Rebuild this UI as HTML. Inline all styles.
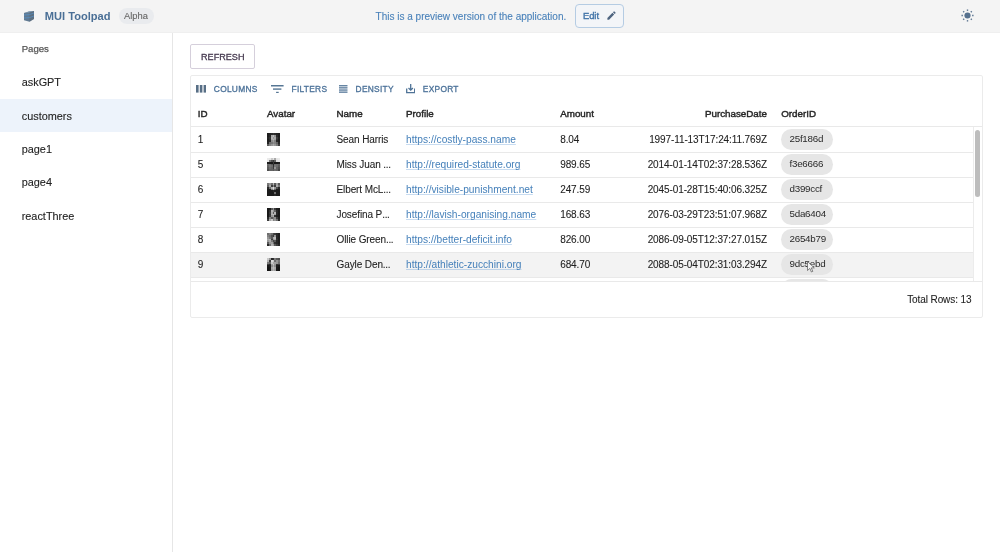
<!DOCTYPE html>
<html><head><meta charset="utf-8">
<style>
*{box-sizing:border-box;margin:0;padding:0}
html,body{width:1000px;height:552px;overflow:hidden;background:#fff;font-family:"Liberation Sans",sans-serif;color:#2b2b2b}
.abs{position:absolute}
.t{position:absolute;white-space:nowrap;line-height:1}
#hdr{position:absolute;left:0;top:0;width:1000px;height:33px;background:#f4f4f4;border-bottom:1px solid #efefef}
#side{position:absolute;left:0;top:33px;width:173px;height:519px;background:#fff;border-right:1px solid #e6e6e6}
.sel{position:absolute;left:0;top:99px;width:172px;height:33px;background:#edf3fb}
#refresh{position:absolute;left:190px;top:44px;width:65px;height:25px;border:1px solid #d5cfdb;border-radius:2px;background:#fff}
#grid{position:absolute;left:190px;top:75px;width:793px;height:243px;border:1px solid #ebebeb;border-radius:2px;background:#fff}
.hl{position:absolute;height:1px;background:#e9e9e9}
.cell{position:absolute;white-space:nowrap;line-height:1;font-size:10px;color:#222;letter-spacing:-0.1px;-webkit-text-stroke:0.08px #222}
.hd{position:absolute;white-space:nowrap;line-height:1;font-size:9.8px;font-weight:400;-webkit-text-stroke:0.42px #262626;color:#262626}
.lnk{-webkit-text-stroke:0 !important;letter-spacing:0 !important;color:#4580ba;font-size:10.2px !important;text-decoration:underline;text-decoration-color:rgba(74,140,210,0.3);text-decoration-thickness:1px;text-underline-offset:0.5px;text-decoration-skip-ink:none}
.chip{position:absolute;height:21px;border-radius:11px;background:#e6e6e6}
.av{position:absolute;width:13px;height:13px;background:#555}
.tb{position:absolute;white-space:nowrap;line-height:1;font-size:8.4px;margin-top:-0.1px;font-weight:400;letter-spacing:0.28px;color:#4c7299;-webkit-text-stroke:0.3px #4c7299}
</style></head><body><div id="root" style="position:absolute;left:0;top:0;width:1000px;height:552px;will-change:transform">
<div id="hdr">
  <svg class="abs" style="left:0;top:0" width="40" height="30" viewBox="0 0 40 30">
    <polygon points="24,13 29,11.6 34,11 34,19 29.5,21.8 24,20.3" fill="#607a92"/>
    <polygon points="24,13 29,11.6 34,11 29.5,12.6" fill="#7f9ab3"/>
    <polygon points="29.5,12.6 34,11 34,19 29.5,21.8" fill="#5a5f68" opacity="0.4"/>
    <polyline points="24,15 29.5,14.6 34,13" stroke="#4ea2ee" stroke-width="0.6" opacity="0.75" fill="none"/>
    <polyline points="24,18 29.5,17.6 34,16" stroke="#4ea2ee" stroke-width="0.6" opacity="0.75" fill="none"/>
  </svg>
  <div class="t" style="left:44.8px;top:10.6px;font-size:11.1px;font-weight:700;color:#4a6f96">MUI Toolpad</div>
  <div class="abs" style="left:119px;top:8px;width:35px;height:16px;border-radius:8px;background:#e9ebee"></div>
  <div class="t" style="left:124px;top:11.1px;font-size:9.4px;color:#666;-webkit-text-stroke:0.1px #666">Alpha</div>
  <div class="t" style="left:375.6px;top:12.2px;font-size:10px;color:#4a82ba;-webkit-text-stroke:0.1px #4a82ba">This is a preview version of the application.</div>
  <div class="abs" style="left:575px;top:4px;width:49px;height:24px;border:1px solid #b5cce3;border-radius:4px;background:#f3f5f8"></div>
  <div class="t" style="left:582.9px;top:11px;font-size:9.4px;font-weight:400;color:#4274a8;-webkit-text-stroke:0.38px #4274a8">Edit</div>
  <svg class="abs" style="left:606px;top:10px" width="11" height="11" viewBox="0 0 24 24"><path fill="#4f6580" d="M3 17.25V21h3.75L17.81 9.94l-3.75-3.75L3 17.25zM20.71 7.04c.39-.39.39-1.02 0-1.41l-2.34-2.34a.9959.9959 0 0 0-1.41 0l-1.83 1.83 3.75 3.75 1.83-1.83z"/></svg>
  <svg class="abs" style="left:960.8px;top:9px" width="13" height="13" viewBox="0 0 14 14">
    <circle cx="7" cy="7" r="3.3" fill="#56718e"/>
    <g stroke="#56718e" stroke-width="1.5">
      <line x1="7" y1="0.5" x2="7" y2="2"/><line x1="7" y1="12" x2="7" y2="13.5"/>
      <line x1="0.5" y1="7" x2="2" y2="7"/><line x1="12" y1="7" x2="13.5" y2="7"/>
      <line x1="2.4" y1="2.4" x2="3.4" y2="3.4"/><line x1="10.6" y1="10.6" x2="11.6" y2="11.6"/>
      <line x1="2.4" y1="11.6" x2="3.4" y2="10.6"/><line x1="10.6" y1="3.4" x2="11.6" y2="2.4"/>
    </g>
  </svg>
</div>
<div id="side">
</div>
<div class="sel"></div>
<div class="t" style="left:21.7px;top:43.9px;font-size:9.6px;color:#555;-webkit-text-stroke:0.25px #555">Pages</div>
<div class="t" style="left:21.7px;top:77.3px;font-size:10.9px;color:#222;-webkit-text-stroke:0.1px #222">askGPT</div>
<div class="t" style="left:21.7px;top:110.7px;font-size:10.9px;color:#222;-webkit-text-stroke:0.1px #222">customers</div>
<div class="t" style="left:21.7px;top:144.0px;font-size:10.9px;color:#222;-webkit-text-stroke:0.1px #222">page1</div>
<div class="t" style="left:21.7px;top:177.4px;font-size:10.9px;color:#222;-webkit-text-stroke:0.1px #222">page4</div>
<div class="t" style="left:21.7px;top:210.7px;font-size:10.9px;color:#222;-webkit-text-stroke:0.1px #222">reactThree</div>

<div id="refresh"></div>
<div class="t" style="left:201px;top:53px;font-size:9.1px;color:#463a50;-webkit-text-stroke:0.3px #463a50">REFRESH</div>

<div id="grid"></div>
<!-- GRID -->
<svg class="abs" style="left:196px;top:85.2px" width="10.2" height="7.6" viewBox="0 0 10.2 7.6"><rect x="0" y="0" width="2.6" height="7.6" fill="#586f86"/><rect x="3.8" y="0" width="2.6" height="7.6" fill="#586f86"/><rect x="7.6" y="0" width="2.6" height="7.6" fill="#586f86"/></svg>
<div class="tb" style="left:213.8px;top:85px">COLUMNS</div>
<svg class="abs" style="left:271px;top:85px" width="12.6" height="8.2" viewBox="0 0 12.6 8.2"><rect x="0" y="0" width="12.6" height="1.5" fill="#567694"/><rect x="2" y="3.4" width="8.4" height="1.4" fill="#567694"/><rect x="5.1" y="6.8" width="2.6" height="1.4" fill="#567694"/></svg>
<div class="tb" style="left:291.5px;top:85px">FILTERS</div>
<svg class="abs" style="left:339px;top:85px" width="9" height="8" viewBox="0 0 9 8"><rect x="0" y="0.1" width="8.5" height="1.3" fill="#56789a"/><rect x="0" y="2.2" width="8.5" height="1.3" fill="#56789a"/><rect x="0" y="4.4" width="8.5" height="1.3" fill="#56789a"/><rect x="0" y="6.5" width="8.5" height="1.3" fill="#56789a"/></svg>
<div class="tb" style="left:355.6px;top:85px">DENSITY</div>
<svg class="abs" style="left:406px;top:84.4px" width="9.4" height="9.4" viewBox="0 0 9.4 9.4"><path d="M0.7 4.5 V8.7 H8.7 V4.5" stroke="#4f7397" stroke-width="1.3" fill="none"/><path d="M4.7 0 V6.2 M2.5 4 L4.7 6.2 L6.9 4" stroke="#4f7397" stroke-width="1.3" fill="none"/></svg>
<div class="tb" style="left:422.8px;top:85px">EXPORT</div>
<div class="hd" style="left:197.7px;top:108.5px">ID</div>
<div class="hd" style="left:267px;top:108.5px">Avatar</div>
<div class="hd" style="left:336.5px;top:108.5px">Name</div>
<div class="hd" style="left:406px;top:108.5px">Profile</div>
<div class="hd" style="left:560.2px;top:108.5px">Amount</div>
<div class="hd" style="right:233px;top:108.5px">PurchaseDate</div>
<div class="hd" style="left:781.2px;top:108.5px">OrderID</div>
<div class="hl" style="left:191px;top:126.3px;width:791px"></div>
<div class="abs" style="left:191px;top:251.5px;width:782px;height:25px;background:#f3f3f3"></div>
<div class="hl" style="left:191px;top:151.5px;width:782px"></div>
<div class="cell" style="left:197.7px;top:134.9px">1</div>
<svg class="abs" style="left:267px;top:133px" width="13" height="13" viewBox="0 0 7 7" preserveAspectRatio="none" shape-rendering="crispEdges"><rect x="0" y="0" width="1.02" height="1.02" fill="rgb(30,30,30)"/><rect x="1" y="0" width="1.02" height="1.02" fill="rgb(35,35,35)"/><rect x="2" y="0" width="1.02" height="1.02" fill="rgb(45,45,45)"/><rect x="3" y="0" width="1.02" height="1.02" fill="rgb(55,55,55)"/><rect x="4" y="0" width="1.02" height="1.02" fill="rgb(45,45,45)"/><rect x="5" y="0" width="1.02" height="1.02" fill="rgb(35,35,35)"/><rect x="6" y="0" width="1.02" height="1.02" fill="rgb(30,30,30)"/><rect x="0" y="1" width="1.02" height="1.02" fill="rgb(30,30,30)"/><rect x="1" y="1" width="1.02" height="1.02" fill="rgb(40,40,40)"/><rect x="2" y="1" width="1.02" height="1.02" fill="rgb(170,170,170)"/><rect x="3" y="1" width="1.02" height="1.02" fill="rgb(190,190,190)"/><rect x="4" y="1" width="1.02" height="1.02" fill="rgb(150,150,150)"/><rect x="5" y="1" width="1.02" height="1.02" fill="rgb(45,45,45)"/><rect x="6" y="1" width="1.02" height="1.02" fill="rgb(30,30,30)"/><rect x="0" y="2" width="1.02" height="1.02" fill="rgb(35,35,35)"/><rect x="1" y="2" width="1.02" height="1.02" fill="rgb(50,50,50)"/><rect x="2" y="2" width="1.02" height="1.02" fill="rgb(180,180,180)"/><rect x="3" y="2" width="1.02" height="1.02" fill="rgb(150,150,150)"/><rect x="4" y="2" width="1.02" height="1.02" fill="rgb(170,170,170)"/><rect x="5" y="2" width="1.02" height="1.02" fill="rgb(60,60,60)"/><rect x="6" y="2" width="1.02" height="1.02" fill="rgb(35,35,35)"/><rect x="0" y="3" width="1.02" height="1.02" fill="rgb(30,30,30)"/><rect x="1" y="3" width="1.02" height="1.02" fill="rgb(45,45,45)"/><rect x="2" y="3" width="1.02" height="1.02" fill="rgb(170,170,170)"/><rect x="3" y="3" width="1.02" height="1.02" fill="rgb(180,180,180)"/><rect x="4" y="3" width="1.02" height="1.02" fill="rgb(160,160,160)"/><rect x="5" y="3" width="1.02" height="1.02" fill="rgb(50,50,50)"/><rect x="6" y="3" width="1.02" height="1.02" fill="rgb(30,30,30)"/><rect x="0" y="4" width="1.02" height="1.02" fill="rgb(30,30,30)"/><rect x="1" y="4" width="1.02" height="1.02" fill="rgb(40,40,40)"/><rect x="2" y="4" width="1.02" height="1.02" fill="rgb(140,140,140)"/><rect x="3" y="4" width="1.02" height="1.02" fill="rgb(160,160,160)"/><rect x="4" y="4" width="1.02" height="1.02" fill="rgb(130,130,130)"/><rect x="5" y="4" width="1.02" height="1.02" fill="rgb(40,40,40)"/><rect x="6" y="4" width="1.02" height="1.02" fill="rgb(30,30,30)"/><rect x="0" y="5" width="1.02" height="1.02" fill="rgb(35,35,35)"/><rect x="1" y="5" width="1.02" height="1.02" fill="rgb(110,110,110)"/><rect x="2" y="5" width="1.02" height="1.02" fill="rgb(120,120,120)"/><rect x="3" y="5" width="1.02" height="1.02" fill="rgb(140,140,140)"/><rect x="4" y="5" width="1.02" height="1.02" fill="rgb(130,130,130)"/><rect x="5" y="5" width="1.02" height="1.02" fill="rgb(100,100,100)"/><rect x="6" y="5" width="1.02" height="1.02" fill="rgb(40,40,40)"/><rect x="0" y="6" width="1.02" height="1.02" fill="rgb(90,90,90)"/><rect x="1" y="6" width="1.02" height="1.02" fill="rgb(130,130,130)"/><rect x="2" y="6" width="1.02" height="1.02" fill="rgb(150,150,150)"/><rect x="3" y="6" width="1.02" height="1.02" fill="rgb(170,170,170)"/><rect x="4" y="6" width="1.02" height="1.02" fill="rgb(150,150,150)"/><rect x="5" y="6" width="1.02" height="1.02" fill="rgb(120,120,120)"/><rect x="6" y="6" width="1.02" height="1.02" fill="rgb(60,60,60)"/></svg>
<div class="cell" style="left:336.5px;top:134.9px">Sean Harris</div>
<div class="cell lnk" style="left:406px;top:134.9px">https://costly-pass.name</div>
<div class="cell" style="left:560.2px;top:134.9px">8.04</div>
<div class="cell" style="right:233px;top:134.9px">1997-11-13T17:24:11.769Z</div>
<div class="chip" style="left:781px;top:129px;width:52px"></div>
<div class="cell" style="left:789.5px;top:134.3px;font-size:9.8px;letter-spacing:-0.25px;-webkit-text-stroke:0;color:#2a2a2a">25f186d</div>
<div class="hl" style="left:191px;top:176.5px;width:782px"></div>
<div class="cell" style="left:197.7px;top:159.9px">5</div>
<svg class="abs" style="left:267px;top:158px" width="13" height="13" viewBox="0 0 7 7" preserveAspectRatio="none" shape-rendering="crispEdges"><rect x="0" y="0" width="1.02" height="1.02" fill="rgb(235,235,235)"/><rect x="1" y="0" width="1.02" height="1.02" fill="rgb(230,230,230)"/><rect x="2" y="0" width="1.02" height="1.02" fill="rgb(200,200,200)"/><rect x="3" y="0" width="1.02" height="1.02" fill="rgb(225,225,225)"/><rect x="4" y="0" width="1.02" height="1.02" fill="rgb(170,170,170)"/><rect x="5" y="0" width="1.02" height="1.02" fill="rgb(230,230,230)"/><rect x="6" y="0" width="1.02" height="1.02" fill="rgb(235,235,235)"/><rect x="0" y="1" width="1.02" height="1.02" fill="rgb(230,230,230)"/><rect x="1" y="1" width="1.02" height="1.02" fill="rgb(120,120,120)"/><rect x="2" y="1" width="1.02" height="1.02" fill="rgb(80,80,80)"/><rect x="3" y="1" width="1.02" height="1.02" fill="rgb(60,60,60)"/><rect x="4" y="1" width="1.02" height="1.02" fill="rgb(100,100,100)"/><rect x="5" y="1" width="1.02" height="1.02" fill="rgb(225,225,225)"/><rect x="6" y="1" width="1.02" height="1.02" fill="rgb(230,230,230)"/><rect x="0" y="2" width="1.02" height="1.02" fill="rgb(30,30,30)"/><rect x="1" y="2" width="1.02" height="1.02" fill="rgb(25,25,25)"/><rect x="2" y="2" width="1.02" height="1.02" fill="rgb(25,25,25)"/><rect x="3" y="2" width="1.02" height="1.02" fill="rgb(60,60,60)"/><rect x="4" y="2" width="1.02" height="1.02" fill="rgb(25,25,25)"/><rect x="5" y="2" width="1.02" height="1.02" fill="rgb(25,25,25)"/><rect x="6" y="2" width="1.02" height="1.02" fill="rgb(30,30,30)"/><rect x="0" y="3" width="1.02" height="1.02" fill="rgb(110,110,110)"/><rect x="1" y="3" width="1.02" height="1.02" fill="rgb(110,110,110)"/><rect x="2" y="3" width="1.02" height="1.02" fill="rgb(90,90,90)"/><rect x="3" y="3" width="1.02" height="1.02" fill="rgb(40,40,40)"/><rect x="4" y="3" width="1.02" height="1.02" fill="rgb(110,110,110)"/><rect x="5" y="3" width="1.02" height="1.02" fill="rgb(110,110,110)"/><rect x="6" y="3" width="1.02" height="1.02" fill="rgb(100,100,100)"/><rect x="0" y="4" width="1.02" height="1.02" fill="rgb(100,100,100)"/><rect x="1" y="4" width="1.02" height="1.02" fill="rgb(120,120,120)"/><rect x="2" y="4" width="1.02" height="1.02" fill="rgb(110,110,110)"/><rect x="3" y="4" width="1.02" height="1.02" fill="rgb(50,50,50)"/><rect x="4" y="4" width="1.02" height="1.02" fill="rgb(120,120,120)"/><rect x="5" y="4" width="1.02" height="1.02" fill="rgb(110,110,110)"/><rect x="6" y="4" width="1.02" height="1.02" fill="rgb(90,90,90)"/><rect x="0" y="5" width="1.02" height="1.02" fill="rgb(90,90,90)"/><rect x="1" y="5" width="1.02" height="1.02" fill="rgb(110,110,110)"/><rect x="2" y="5" width="1.02" height="1.02" fill="rgb(100,100,100)"/><rect x="3" y="5" width="1.02" height="1.02" fill="rgb(60,60,60)"/><rect x="4" y="5" width="1.02" height="1.02" fill="rgb(150,150,150)"/><rect x="5" y="5" width="1.02" height="1.02" fill="rgb(100,100,100)"/><rect x="6" y="5" width="1.02" height="1.02" fill="rgb(80,80,80)"/><rect x="0" y="6" width="1.02" height="1.02" fill="rgb(80,80,80)"/><rect x="1" y="6" width="1.02" height="1.02" fill="rgb(100,100,100)"/><rect x="2" y="6" width="1.02" height="1.02" fill="rgb(100,100,100)"/><rect x="3" y="6" width="1.02" height="1.02" fill="rgb(90,90,90)"/><rect x="4" y="6" width="1.02" height="1.02" fill="rgb(110,110,110)"/><rect x="5" y="6" width="1.02" height="1.02" fill="rgb(100,100,100)"/><rect x="6" y="6" width="1.02" height="1.02" fill="rgb(70,70,70)"/></svg>
<div class="cell" style="left:336.5px;top:159.9px">Miss Juan <span style="letter-spacing:-0.35px">...</span></div>
<div class="cell lnk" style="left:406px;top:159.9px">http://required-statute.org</div>
<div class="cell" style="left:560.2px;top:159.9px">989.65</div>
<div class="cell" style="right:233px;top:159.9px">2014-01-14T02:37:28.536Z</div>
<div class="chip" style="left:781px;top:154px;width:52px"></div>
<div class="cell" style="left:789.5px;top:159.3px;font-size:9.8px;letter-spacing:-0.25px;-webkit-text-stroke:0;color:#2a2a2a">f3e6666</div>
<div class="hl" style="left:191px;top:201.5px;width:782px"></div>
<div class="cell" style="left:197.7px;top:184.9px">6</div>
<svg class="abs" style="left:267px;top:183px" width="13" height="13" viewBox="0 0 7 7" preserveAspectRatio="none" shape-rendering="crispEdges"><rect x="0" y="0" width="1.02" height="1.02" fill="rgb(120,120,120)"/><rect x="1" y="0" width="1.02" height="1.02" fill="rgb(150,150,150)"/><rect x="2" y="0" width="1.02" height="1.02" fill="rgb(110,110,110)"/><rect x="3" y="0" width="1.02" height="1.02" fill="rgb(180,180,180)"/><rect x="4" y="0" width="1.02" height="1.02" fill="rgb(90,90,90)"/><rect x="5" y="0" width="1.02" height="1.02" fill="rgb(160,160,160)"/><rect x="6" y="0" width="1.02" height="1.02" fill="rgb(90,90,90)"/><rect x="0" y="1" width="1.02" height="1.02" fill="rgb(100,100,100)"/><rect x="1" y="1" width="1.02" height="1.02" fill="rgb(170,170,170)"/><rect x="2" y="1" width="1.02" height="1.02" fill="rgb(60,60,60)"/><rect x="3" y="1" width="1.02" height="1.02" fill="rgb(130,130,130)"/><rect x="4" y="1" width="1.02" height="1.02" fill="rgb(60,60,60)"/><rect x="5" y="1" width="1.02" height="1.02" fill="rgb(170,170,170)"/><rect x="6" y="1" width="1.02" height="1.02" fill="rgb(120,120,120)"/><rect x="0" y="2" width="1.02" height="1.02" fill="rgb(40,40,40)"/><rect x="1" y="2" width="1.02" height="1.02" fill="rgb(110,110,110)"/><rect x="2" y="2" width="1.02" height="1.02" fill="rgb(180,180,180)"/><rect x="3" y="2" width="1.02" height="1.02" fill="rgb(220,220,220)"/><rect x="4" y="2" width="1.02" height="1.02" fill="rgb(150,150,150)"/><rect x="5" y="2" width="1.02" height="1.02" fill="rgb(80,80,80)"/><rect x="6" y="2" width="1.02" height="1.02" fill="rgb(40,40,40)"/><rect x="0" y="3" width="1.02" height="1.02" fill="rgb(30,30,30)"/><rect x="1" y="3" width="1.02" height="1.02" fill="rgb(30,30,30)"/><rect x="2" y="3" width="1.02" height="1.02" fill="rgb(130,130,130)"/><rect x="3" y="3" width="1.02" height="1.02" fill="rgb(190,190,190)"/><rect x="4" y="3" width="1.02" height="1.02" fill="rgb(100,100,100)"/><rect x="5" y="3" width="1.02" height="1.02" fill="rgb(30,30,30)"/><rect x="6" y="3" width="1.02" height="1.02" fill="rgb(30,30,30)"/><rect x="0" y="4" width="1.02" height="1.02" fill="rgb(28,28,28)"/><rect x="1" y="4" width="1.02" height="1.02" fill="rgb(28,28,28)"/><rect x="2" y="4" width="1.02" height="1.02" fill="rgb(28,28,28)"/><rect x="3" y="4" width="1.02" height="1.02" fill="rgb(40,40,40)"/><rect x="4" y="4" width="1.02" height="1.02" fill="rgb(30,30,30)"/><rect x="5" y="4" width="1.02" height="1.02" fill="rgb(28,28,28)"/><rect x="6" y="4" width="1.02" height="1.02" fill="rgb(28,28,28)"/><rect x="0" y="5" width="1.02" height="1.02" fill="rgb(28,28,28)"/><rect x="1" y="5" width="1.02" height="1.02" fill="rgb(28,28,28)"/><rect x="2" y="5" width="1.02" height="1.02" fill="rgb(28,28,28)"/><rect x="3" y="5" width="1.02" height="1.02" fill="rgb(28,28,28)"/><rect x="4" y="5" width="1.02" height="1.02" fill="rgb(110,110,110)"/><rect x="5" y="5" width="1.02" height="1.02" fill="rgb(28,28,28)"/><rect x="6" y="5" width="1.02" height="1.02" fill="rgb(28,28,28)"/><rect x="0" y="6" width="1.02" height="1.02" fill="rgb(28,28,28)"/><rect x="1" y="6" width="1.02" height="1.02" fill="rgb(28,28,28)"/><rect x="2" y="6" width="1.02" height="1.02" fill="rgb(28,28,28)"/><rect x="3" y="6" width="1.02" height="1.02" fill="rgb(28,28,28)"/><rect x="4" y="6" width="1.02" height="1.02" fill="rgb(40,40,40)"/><rect x="5" y="6" width="1.02" height="1.02" fill="rgb(28,28,28)"/><rect x="6" y="6" width="1.02" height="1.02" fill="rgb(28,28,28)"/></svg>
<div class="cell" style="left:336.5px;top:184.9px">Elbert McL<span style="letter-spacing:-0.35px">...</span></div>
<div class="cell lnk" style="left:406px;top:184.9px">http://visible-punishment.net</div>
<div class="cell" style="left:560.2px;top:184.9px">247.59</div>
<div class="cell" style="right:233px;top:184.9px">2045-01-28T15:40:06.325Z</div>
<div class="chip" style="left:781px;top:179px;width:52px"></div>
<div class="cell" style="left:789.5px;top:184.3px;font-size:9.8px;letter-spacing:-0.25px;-webkit-text-stroke:0;color:#2a2a2a">d399ccf</div>
<div class="hl" style="left:191px;top:226.5px;width:782px"></div>
<div class="cell" style="left:197.7px;top:209.9px">7</div>
<svg class="abs" style="left:267px;top:208px" width="13" height="13" viewBox="0 0 7 7" preserveAspectRatio="none" shape-rendering="crispEdges"><rect x="0" y="0" width="1.02" height="1.02" fill="rgb(25,25,25)"/><rect x="1" y="0" width="1.02" height="1.02" fill="rgb(30,30,30)"/><rect x="2" y="0" width="1.02" height="1.02" fill="rgb(90,90,90)"/><rect x="3" y="0" width="1.02" height="1.02" fill="rgb(140,140,140)"/><rect x="4" y="0" width="1.02" height="1.02" fill="rgb(60,60,60)"/><rect x="5" y="0" width="1.02" height="1.02" fill="rgb(30,30,30)"/><rect x="6" y="0" width="1.02" height="1.02" fill="rgb(25,25,25)"/><rect x="0" y="1" width="1.02" height="1.02" fill="rgb(25,25,25)"/><rect x="1" y="1" width="1.02" height="1.02" fill="rgb(50,50,50)"/><rect x="2" y="1" width="1.02" height="1.02" fill="rgb(180,180,180)"/><rect x="3" y="1" width="1.02" height="1.02" fill="rgb(150,150,150)"/><rect x="4" y="1" width="1.02" height="1.02" fill="rgb(100,100,100)"/><rect x="5" y="1" width="1.02" height="1.02" fill="rgb(40,40,40)"/><rect x="6" y="1" width="1.02" height="1.02" fill="rgb(25,25,25)"/><rect x="0" y="2" width="1.02" height="1.02" fill="rgb(25,25,25)"/><rect x="1" y="2" width="1.02" height="1.02" fill="rgb(60,60,60)"/><rect x="2" y="2" width="1.02" height="1.02" fill="rgb(170,170,170)"/><rect x="3" y="2" width="1.02" height="1.02" fill="rgb(90,90,90)"/><rect x="4" y="2" width="1.02" height="1.02" fill="rgb(180,180,180)"/><rect x="5" y="2" width="1.02" height="1.02" fill="rgb(40,40,40)"/><rect x="6" y="2" width="1.02" height="1.02" fill="rgb(25,25,25)"/><rect x="0" y="3" width="1.02" height="1.02" fill="rgb(25,25,25)"/><rect x="1" y="3" width="1.02" height="1.02" fill="rgb(50,50,50)"/><rect x="2" y="3" width="1.02" height="1.02" fill="rgb(180,180,180)"/><rect x="3" y="3" width="1.02" height="1.02" fill="rgb(190,190,190)"/><rect x="4" y="3" width="1.02" height="1.02" fill="rgb(160,160,160)"/><rect x="5" y="3" width="1.02" height="1.02" fill="rgb(40,40,40)"/><rect x="6" y="3" width="1.02" height="1.02" fill="rgb(25,25,25)"/><rect x="0" y="4" width="1.02" height="1.02" fill="rgb(25,25,25)"/><rect x="1" y="4" width="1.02" height="1.02" fill="rgb(60,60,60)"/><rect x="2" y="4" width="1.02" height="1.02" fill="rgb(150,150,150)"/><rect x="3" y="4" width="1.02" height="1.02" fill="rgb(170,170,170)"/><rect x="4" y="4" width="1.02" height="1.02" fill="rgb(50,50,50)"/><rect x="5" y="4" width="1.02" height="1.02" fill="rgb(30,30,30)"/><rect x="6" y="4" width="1.02" height="1.02" fill="rgb(25,25,25)"/><rect x="0" y="5" width="1.02" height="1.02" fill="rgb(40,40,40)"/><rect x="1" y="5" width="1.02" height="1.02" fill="rgb(130,130,130)"/><rect x="2" y="5" width="1.02" height="1.02" fill="rgb(90,90,90)"/><rect x="3" y="5" width="1.02" height="1.02" fill="rgb(120,120,120)"/><rect x="4" y="5" width="1.02" height="1.02" fill="rgb(140,140,140)"/><rect x="5" y="5" width="1.02" height="1.02" fill="rgb(60,60,60)"/><rect x="6" y="5" width="1.02" height="1.02" fill="rgb(30,30,30)"/><rect x="0" y="6" width="1.02" height="1.02" fill="rgb(60,60,60)"/><rect x="1" y="6" width="1.02" height="1.02" fill="rgb(170,170,170)"/><rect x="2" y="6" width="1.02" height="1.02" fill="rgb(200,200,200)"/><rect x="3" y="6" width="1.02" height="1.02" fill="rgb(130,130,130)"/><rect x="4" y="6" width="1.02" height="1.02" fill="rgb(150,150,150)"/><rect x="5" y="6" width="1.02" height="1.02" fill="rgb(110,110,110)"/><rect x="6" y="6" width="1.02" height="1.02" fill="rgb(40,40,40)"/></svg>
<div class="cell" style="left:336.5px;top:209.9px">Josefina P<span style="letter-spacing:-0.35px">...</span></div>
<div class="cell lnk" style="left:406px;top:209.9px">http://lavish-organising.name</div>
<div class="cell" style="left:560.2px;top:209.9px">168.63</div>
<div class="cell" style="right:233px;top:209.9px">2076-03-29T23:51:07.968Z</div>
<div class="chip" style="left:781px;top:204px;width:52px"></div>
<div class="cell" style="left:789.5px;top:209.3px;font-size:9.8px;letter-spacing:-0.25px;-webkit-text-stroke:0;color:#2a2a2a">5da6404</div>
<div class="hl" style="left:191px;top:251.5px;width:782px"></div>
<div class="cell" style="left:197.7px;top:234.9px">8</div>
<svg class="abs" style="left:267px;top:233px" width="13" height="13" viewBox="0 0 7 7" preserveAspectRatio="none" shape-rendering="crispEdges"><rect x="0" y="0" width="1.02" height="1.02" fill="rgb(110,110,110)"/><rect x="1" y="0" width="1.02" height="1.02" fill="rgb(130,130,130)"/><rect x="2" y="0" width="1.02" height="1.02" fill="rgb(110,110,110)"/><rect x="3" y="0" width="1.02" height="1.02" fill="rgb(70,70,70)"/><rect x="4" y="0" width="1.02" height="1.02" fill="rgb(60,60,60)"/><rect x="5" y="0" width="1.02" height="1.02" fill="rgb(40,40,40)"/><rect x="6" y="0" width="1.02" height="1.02" fill="rgb(30,30,30)"/><rect x="0" y="1" width="1.02" height="1.02" fill="rgb(130,130,130)"/><rect x="1" y="1" width="1.02" height="1.02" fill="rgb(110,110,110)"/><rect x="2" y="1" width="1.02" height="1.02" fill="rgb(80,80,80)"/><rect x="3" y="1" width="1.02" height="1.02" fill="rgb(60,60,60)"/><rect x="4" y="1" width="1.02" height="1.02" fill="rgb(150,150,150)"/><rect x="5" y="1" width="1.02" height="1.02" fill="rgb(40,40,40)"/><rect x="6" y="1" width="1.02" height="1.02" fill="rgb(30,30,30)"/><rect x="0" y="2" width="1.02" height="1.02" fill="rgb(150,150,150)"/><rect x="1" y="2" width="1.02" height="1.02" fill="rgb(120,120,120)"/><rect x="2" y="2" width="1.02" height="1.02" fill="rgb(90,90,90)"/><rect x="3" y="2" width="1.02" height="1.02" fill="rgb(170,170,170)"/><rect x="4" y="2" width="1.02" height="1.02" fill="rgb(190,190,190)"/><rect x="5" y="2" width="1.02" height="1.02" fill="rgb(40,40,40)"/><rect x="6" y="2" width="1.02" height="1.02" fill="rgb(30,30,30)"/><rect x="0" y="3" width="1.02" height="1.02" fill="rgb(170,170,170)"/><rect x="1" y="3" width="1.02" height="1.02" fill="rgb(180,180,180)"/><rect x="2" y="3" width="1.02" height="1.02" fill="rgb(60,60,60)"/><rect x="3" y="3" width="1.02" height="1.02" fill="rgb(150,150,150)"/><rect x="4" y="3" width="1.02" height="1.02" fill="rgb(170,170,170)"/><rect x="5" y="3" width="1.02" height="1.02" fill="rgb(50,50,50)"/><rect x="6" y="3" width="1.02" height="1.02" fill="rgb(30,30,30)"/><rect x="0" y="4" width="1.02" height="1.02" fill="rgb(150,150,150)"/><rect x="1" y="4" width="1.02" height="1.02" fill="rgb(170,170,170)"/><rect x="2" y="4" width="1.02" height="1.02" fill="rgb(120,120,120)"/><rect x="3" y="4" width="1.02" height="1.02" fill="rgb(70,70,70)"/><rect x="4" y="4" width="1.02" height="1.02" fill="rgb(90,90,90)"/><rect x="5" y="4" width="1.02" height="1.02" fill="rgb(40,40,40)"/><rect x="6" y="4" width="1.02" height="1.02" fill="rgb(30,30,30)"/><rect x="0" y="5" width="1.02" height="1.02" fill="rgb(90,90,90)"/><rect x="1" y="5" width="1.02" height="1.02" fill="rgb(150,150,150)"/><rect x="2" y="5" width="1.02" height="1.02" fill="rgb(160,160,160)"/><rect x="3" y="5" width="1.02" height="1.02" fill="rgb(110,110,110)"/><rect x="4" y="5" width="1.02" height="1.02" fill="rgb(50,50,50)"/><rect x="5" y="5" width="1.02" height="1.02" fill="rgb(40,40,40)"/><rect x="6" y="5" width="1.02" height="1.02" fill="rgb(30,30,30)"/><rect x="0" y="6" width="1.02" height="1.02" fill="rgb(40,40,40)"/><rect x="1" y="6" width="1.02" height="1.02" fill="rgb(110,110,110)"/><rect x="2" y="6" width="1.02" height="1.02" fill="rgb(180,180,180)"/><rect x="3" y="6" width="1.02" height="1.02" fill="rgb(160,160,160)"/><rect x="4" y="6" width="1.02" height="1.02" fill="rgb(90,90,90)"/><rect x="5" y="6" width="1.02" height="1.02" fill="rgb(60,60,60)"/><rect x="6" y="6" width="1.02" height="1.02" fill="rgb(40,40,40)"/></svg>
<div class="cell" style="left:336.5px;top:234.9px">Ollie Green<span style="letter-spacing:-0.35px">...</span></div>
<div class="cell lnk" style="left:406px;top:234.9px">https://better-deficit.info</div>
<div class="cell" style="left:560.2px;top:234.9px">826.00</div>
<div class="cell" style="right:233px;top:234.9px">2086-09-05T12:37:27.015Z</div>
<div class="chip" style="left:781px;top:229px;width:52px"></div>
<div class="cell" style="left:789.5px;top:234.3px;font-size:9.8px;letter-spacing:-0.25px;-webkit-text-stroke:0;color:#2a2a2a">2654b79</div>
<div class="hl" style="left:191px;top:276.5px;width:782px"></div>
<div class="cell" style="left:197.7px;top:259.9px">9</div>
<svg class="abs" style="left:267px;top:258px" width="13" height="13" viewBox="0 0 7 7" preserveAspectRatio="none" shape-rendering="crispEdges"><rect x="0" y="0" width="1.02" height="1.02" fill="rgb(200,200,200)"/><rect x="1" y="0" width="1.02" height="1.02" fill="rgb(150,150,150)"/><rect x="2" y="0" width="1.02" height="1.02" fill="rgb(40,40,40)"/><rect x="3" y="0" width="1.02" height="1.02" fill="rgb(50,50,50)"/><rect x="4" y="0" width="1.02" height="1.02" fill="rgb(120,120,120)"/><rect x="5" y="0" width="1.02" height="1.02" fill="rgb(90,90,90)"/><rect x="6" y="0" width="1.02" height="1.02" fill="rgb(80,80,80)"/><rect x="0" y="1" width="1.02" height="1.02" fill="rgb(180,180,180)"/><rect x="1" y="1" width="1.02" height="1.02" fill="rgb(60,60,60)"/><rect x="2" y="1" width="1.02" height="1.02" fill="rgb(220,220,220)"/><rect x="3" y="1" width="1.02" height="1.02" fill="rgb(200,200,200)"/><rect x="4" y="1" width="1.02" height="1.02" fill="rgb(110,110,110)"/><rect x="5" y="1" width="1.02" height="1.02" fill="rgb(150,150,150)"/><rect x="6" y="1" width="1.02" height="1.02" fill="rgb(120,120,120)"/><rect x="0" y="2" width="1.02" height="1.02" fill="rgb(120,120,120)"/><rect x="1" y="2" width="1.02" height="1.02" fill="rgb(100,100,100)"/><rect x="2" y="2" width="1.02" height="1.02" fill="rgb(200,200,200)"/><rect x="3" y="2" width="1.02" height="1.02" fill="rgb(170,170,170)"/><rect x="4" y="2" width="1.02" height="1.02" fill="rgb(160,160,160)"/><rect x="5" y="2" width="1.02" height="1.02" fill="rgb(150,150,150)"/><rect x="6" y="2" width="1.02" height="1.02" fill="rgb(110,110,110)"/><rect x="0" y="3" width="1.02" height="1.02" fill="rgb(60,60,60)"/><rect x="1" y="3" width="1.02" height="1.02" fill="rgb(40,40,40)"/><rect x="2" y="3" width="1.02" height="1.02" fill="rgb(160,160,160)"/><rect x="3" y="3" width="1.02" height="1.02" fill="rgb(200,200,200)"/><rect x="4" y="3" width="1.02" height="1.02" fill="rgb(150,150,150)"/><rect x="5" y="3" width="1.02" height="1.02" fill="rgb(50,50,50)"/><rect x="6" y="3" width="1.02" height="1.02" fill="rgb(60,60,60)"/><rect x="0" y="4" width="1.02" height="1.02" fill="rgb(25,25,25)"/><rect x="1" y="4" width="1.02" height="1.02" fill="rgb(30,30,30)"/><rect x="2" y="4" width="1.02" height="1.02" fill="rgb(140,140,140)"/><rect x="3" y="4" width="1.02" height="1.02" fill="rgb(180,180,180)"/><rect x="4" y="4" width="1.02" height="1.02" fill="rgb(140,140,140)"/><rect x="5" y="4" width="1.02" height="1.02" fill="rgb(30,30,30)"/><rect x="6" y="4" width="1.02" height="1.02" fill="rgb(25,25,25)"/><rect x="0" y="5" width="1.02" height="1.02" fill="rgb(20,20,20)"/><rect x="1" y="5" width="1.02" height="1.02" fill="rgb(25,25,25)"/><rect x="2" y="5" width="1.02" height="1.02" fill="rgb(170,170,170)"/><rect x="3" y="5" width="1.02" height="1.02" fill="rgb(190,190,190)"/><rect x="4" y="5" width="1.02" height="1.02" fill="rgb(170,170,170)"/><rect x="5" y="5" width="1.02" height="1.02" fill="rgb(25,25,25)"/><rect x="6" y="5" width="1.02" height="1.02" fill="rgb(20,20,20)"/><rect x="0" y="6" width="1.02" height="1.02" fill="rgb(20,20,20)"/><rect x="1" y="6" width="1.02" height="1.02" fill="rgb(25,25,25)"/><rect x="2" y="6" width="1.02" height="1.02" fill="rgb(160,160,160)"/><rect x="3" y="6" width="1.02" height="1.02" fill="rgb(180,180,180)"/><rect x="4" y="6" width="1.02" height="1.02" fill="rgb(160,160,160)"/><rect x="5" y="6" width="1.02" height="1.02" fill="rgb(25,25,25)"/><rect x="6" y="6" width="1.02" height="1.02" fill="rgb(20,20,20)"/></svg>
<div class="cell" style="left:336.5px;top:259.9px">Gayle Den<span style="letter-spacing:-0.35px">...</span></div>
<div class="cell lnk" style="left:406px;top:259.9px">http://athletic-zucchini.org</div>
<div class="cell" style="left:560.2px;top:259.9px">684.70</div>
<div class="cell" style="right:233px;top:259.9px">2088-05-04T02:31:03.294Z</div>
<div class="chip" style="left:781px;top:254px;width:52px"></div>
<div class="cell" style="left:789.5px;top:259.3px;font-size:9.8px;letter-spacing:-0.25px;-webkit-text-stroke:0;color:#2a2a2a">9dc5ebd</div>
<div class="abs" style="left:781px;top:277.5px;width:52px;height:3.5px;overflow:hidden"><div class="chip" style="left:0;top:1.3px;width:52px"></div></div>
<div class="abs" style="left:973px;top:127px;width:1px;height:154px;background:#ececec"></div>
<div class="abs" style="left:975.3px;top:129.5px;width:5px;height:67.5px;border-radius:3px;background:#bdbdbd"></div>
<div class="hl" style="left:191px;top:281px;width:791px"></div>
<div class="cell" style="right:28.6px;top:295px">Total Rows: 13</div>
<svg class="abs" style="left:806.5px;top:261px" width="8" height="12" viewBox="0 0 8 12"><path d="M0.5 0.5 L0.5 9.5 L2.8 7.4 L4.4 11 L5.8 10.4 L4.3 6.9 L7.3 6.9 Z" fill="#f4f4f4" stroke="#555" stroke-width="0.7"/></svg>
</div></body></html>
